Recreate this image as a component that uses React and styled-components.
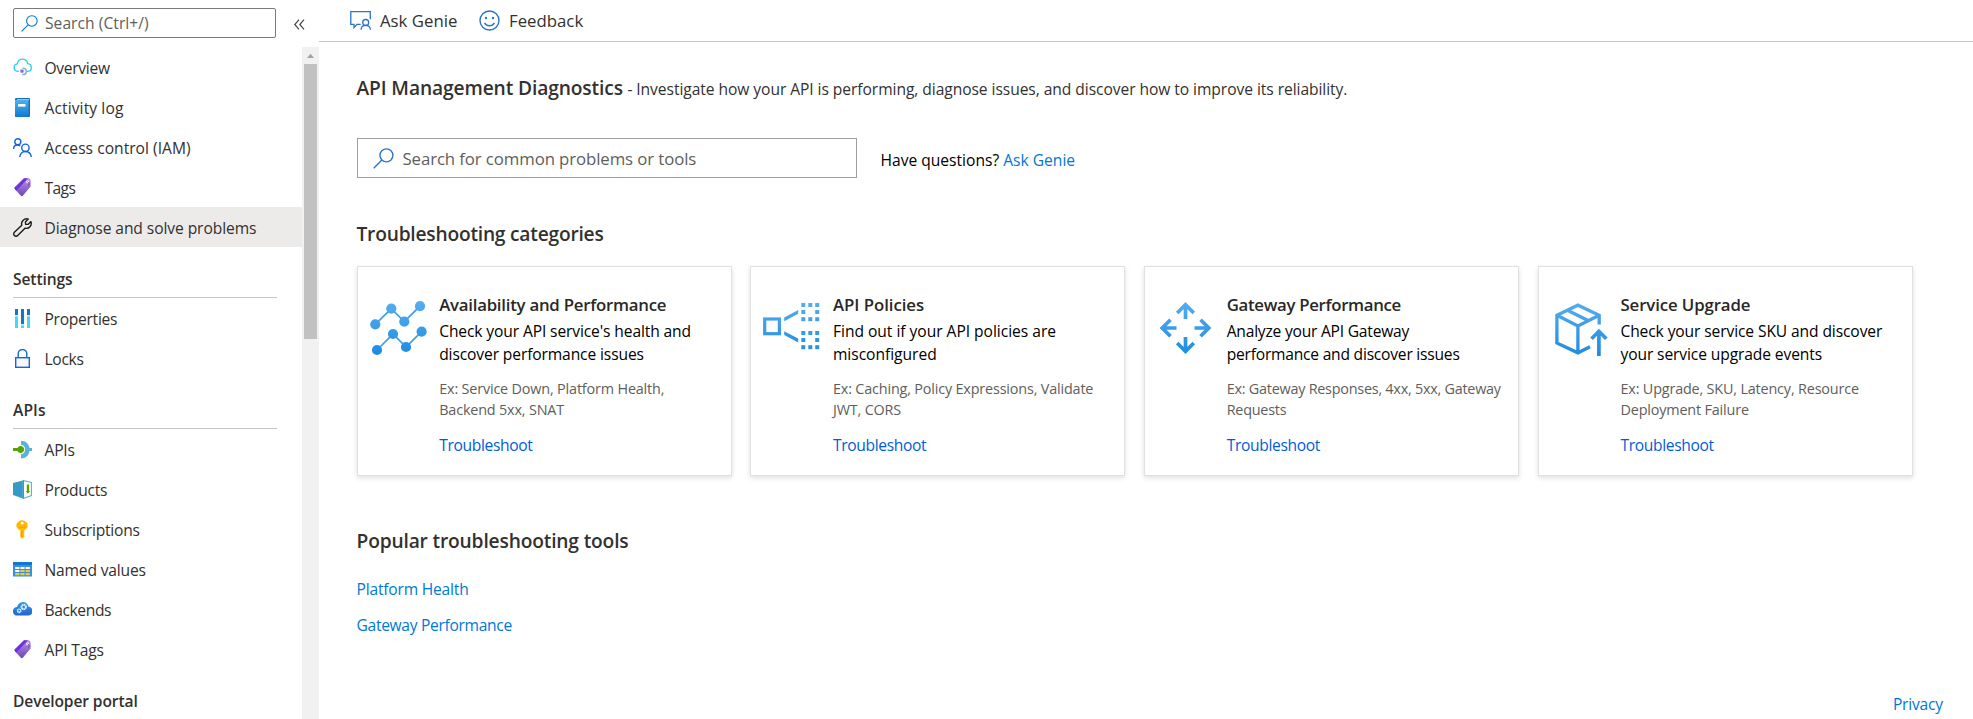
import React from "react";
import styled, { createGlobalStyle } from "styled-components";

const GlobalStyle = createGlobalStyle`
  *, *::before, *::after { box-sizing: border-box; }
  body {
    margin: 0;
    background: #fff;
    color: #323130;
    font: 15.6px/20px "Open Sans", "Noto Sans", sans-serif;
    overflow: hidden;
  }
`;

const Page = styled.div`
  display: flex;
  width: 100%;
  height: 719px;
  overflow: hidden;
`;

/* Sidebar */
const Sidebar = styled.aside`
  display: flex;
  flex-direction: column;
  flex: none;
  width: 319px;
`;
const SidebarTop = styled.div`
  display: flex;
  flex: none;
  align-items: flex-start;
  height: 47px;
  padding: 8px 14px 0 13px;
`;
const MenuSearch = styled.div`
  display: flex;
  align-items: center;
  width: 263px;
  height: 30px;
  padding-left: 7px;
  border: 1px solid #7a7a7a;
  border-radius: 2px;
  color: #605e5c;
  svg { width: 17px; height: 17px; margin-right: 7px; }
`;
const Collapse = styled.span`
  margin: 11px 0 0 18px;
  line-height: 0;
`;
const SidebarBody = styled.div`
  display: flex;
  flex: 1;
  min-height: 0;
`;
const Nav = styled.nav`
  flex: 1;
  overflow: hidden;
`;
const NavItem = styled.a`
  display: flex;
  align-items: center;
  height: 40px;
  padding-left: 13px;
  background: ${(p) => (p.$active ? "#edebe9" : "transparent")};
  svg { flex: none; width: 19px; height: 19px; margin-right: 12.5px; }
`;
const Label = styled.span`
  position: relative;
  top: ${(p) => p.$shift ?? 1}px;
  letter-spacing: ${(p) => p.$track || 0}px;
  white-space: nowrap;
`;
const NavHeading = styled.h3`
  display: flex;
  align-items: center;
  height: 51px;
  margin: 0 25px 0 13px;
  padding-top: 11px;
  border-bottom: 1px solid #c8c6c4;
  font-size: 15.6px;
  font-weight: 600;
`;
const Scrollbar = styled.div`
  display: flex;
  flex-direction: column;
  align-items: center;
  width: 17px;
  background: #f1f1f1;
  svg { flex: none; width: 17px; height: 17px; }
`;
const Thumb = styled.div`
  width: 13px;
  height: 275px;
  background: #c1c1c1;
`;

/* Main pane */
const Main = styled.main`
  display: flex;
  flex-direction: column;
  flex: 1;
  min-width: 0;
`;
const Toolbar = styled.header`
  display: flex;
  flex: none;
  align-items: center;
  height: 42px;
  padding-left: 31px;
  border-bottom: 1px solid #c8c6c4;
  font-size: 16.8px;
`;
const ToolButton = styled.a`
  display: flex;
  align-items: center;
  width: ${(p) => p.$width}px;
  svg { width: 22px; height: 22px; margin-right: 8px; }
`;
const Content = styled.div`
  display: flex;
  flex-direction: column;
  flex: 1;
  padding: 0 30px 0 38px;
`;
const Title = styled.div`
  display: flex;
  align-items: baseline;
  height: 30px;
  margin-top: 31px;
  line-height: 30px;
`;
const TitleName = styled.h1`
  margin: 0 4.5px 0 -0.5px;
  font-size: 19.2px;
  font-weight: 600;
  letter-spacing: -0.12px;
`;
const SearchRow = styled.div`
  display: flex;
  align-items: center;
  margin-top: 35px;
`;
const ToolSearch = styled.div`
  display: flex;
  align-items: center;
  width: 500px;
  height: 40px;
  margin-right: 23.5px;
  padding-left: 15px;
  border: 1px solid #a19f9d;
  color: #605e5c;
  font-size: 16.8px;
  svg { width: 21px; height: 21px; margin-right: 8.5px; }
`;
const Question = styled.span`
  margin-top: 1px;
  color: #000;
  white-space: pre;
`;
const Link = styled.a`
  color: #0078d4;
`;
const SectionTitle = styled.h2`
  height: 30px;
  margin: ${(p) => p.$top}px 0 0 -0.5px;
  font-size: 19.2px;
  font-weight: 600;
  line-height: 30px;
`;
const Cards = styled.div`
  display: grid;
  grid-template-columns: repeat(4, 375px);
  gap: 18.75px;
  margin: 17px 0 0 -0.4px;
`;
const Card = styled.article`
  display: flex;
  height: 210px;
  padding: 25px 10px 0 12px;
  border: 1px solid #e1e1e1;
  box-shadow: 0 2px 5px rgba(0, 0, 0, 0.13);
  > svg { flex: none; width: 60px; height: 60px; margin: 8px 10.600px 0 -1px; }
`;
const CardText = styled.div`
  color: #000;
  white-space: nowrap;
`;
const CardTitle = styled.h3`
  margin: 0;
  color: #292827;
  font-size: 16.8px;
  font-weight: 600;
  line-height: 26px;
`;
const CardDescription = styled.p`
  margin: 2px 0 0;
  line-height: 23px;
`;
const CardExamples = styled.p`
  margin: 12px 0 0;
  color: #605e5c;
  font-size: 14.4px;
  line-height: 21px;
`;
const CardLink = styled.a`
  display: block;
  margin-top: 14px;
  color: #015cda;
  line-height: 22px;
`;
const ToolLinks = styled.div`
  display: flex;
  flex-direction: column;
  gap: 16px;
  margin: 22px 0 0 -0.5px;
`;
const Footer = styled.footer`
  display: flex;
  justify-content: flex-end;
  margin-top: auto;
  padding-bottom: 6px;
`;

/* Icons */
const SearchIcon = ({ color = "#0078d4" }) => (
  <svg viewBox="0 0 20 20" fill="none" stroke={color} strokeWidth="1.3">
    <circle cx="12.8" cy="7" r="6.2" /><path d="M8.4 11.5 .7 19.3" />
  </svg>
);
const CloudIcon = () => (
  <svg viewBox="0 0 19 19" fill="none">
    <path d="M6 13.400H4.500A3.800 3.800 0 0 1 4.200 5.900C4.800 3.100 6.900 1.100 9.500 1.100c2.700 0 4.700 1.900 5.100 4.500 2.200.2 3.700 1.800 3.700 3.900 0 2.200-1.600 3.900-3.900 3.900h-1.600" stroke="#32d0ee" strokeWidth="1.400" />
    <path d="M9.500 10.200h.6a3.200 3.200 0 0 1 0 6.400h-1" stroke="#7cb5dc" strokeWidth="1.500" />
    <rect x="7.400" y="11.500" width="3.200" height="3.200" rx=".8" fill="#9a62cf" />
  </svg>
);
const BookIcon = () => (
  <svg viewBox="0 0 19 19">
    <defs><linearGradient id="book" x2="0" y2="1"><stop stopColor="#4fb0ee" /><stop offset="1" stopColor="#0f79d0" /></linearGradient></defs>
    <path d="M3.300 0H16a1 1 0 0 1 1 1v17a1 1 0 0 1-1 1H3.300A1.300 1.300 0 0 1 2 17.700V1.300A1.300 1.300 0 0 1 3.300 0Z" fill="#1b6fb8" />
    <path d="M4 1h12v1.500H4z" fill="#8fc8ef" />
    <path d="M2 2h13.500v17H3.300A1.300 1.300 0 0 1 2 17.700Z" fill="url(#book)" />
    <rect x="5" y="6" width="7.500" height="2.600" fill="#fff" />
  </svg>
);
const PeopleIcon = () => (
  <svg viewBox="0 0 19 19" fill="none" stroke="#1464dc" strokeWidth="1.400">
    <circle cx="4.800" cy="3.700" r="3" /><path d="M.6 11C.6 8.600 2.200 7 4.500 7c1.100 0 2 .4 2.800 1" />
    <circle cx="12.400" cy="9.800" r="3.700" /><path d="M6.800 19c.2-3.100 2.400-5.500 5.600-5.500S17.900 15.900 18.300 19" />
  </svg>
);
const TagIcon = () => (
  <svg viewBox="0 0 19 19">
    <defs><linearGradient id="tag" x2="0" y2="1"><stop stopColor="#b794e8" /><stop offset="1" stopColor="#6f45b5" /></linearGradient></defs>
    <path d="M11 .3H15.500q1.900.3 2.100 2.200V8.500L10 17.600q-1.100 1-2.100.1L2 11.200q-.9-1-.1-2Z" fill="url(#tag)" />
    <path d="M11 .3H15L3.400 12.700 2 11.200q-.9-1-.1-2Z" fill="#7132dc" />
    <circle cx="14.600" cy="3.700" r="1.500" fill="#f5f0ff" /><path d="M14.500 3.500q2.800 1.800 1 4" stroke="#5a2f9e" fill="none" strokeWidth=".8" />
  </svg>
);
const WrenchIcon = () => (
  <svg viewBox="0 0 19 19" fill="none" stroke="#1b1a19" strokeWidth="1.400" strokeLinejoin="round">
    <path d="M17.900 3.600 15 6.400 12.600 6.200 12.400 4 15.300 1.100A5 5 0 0 0 8.800 7.200L1.400 14.300a2.300 2.300 0 1 0 3.300 3.300L12 10.200a5 5 0 0 0 5.900-6.600Z" />
  </svg>
);
const PropertiesIcon = () => (
  <svg viewBox="0 0 19 19">
    <path d="M2 0h3v6H2zM8 0h3v15H8zM14 0h3v6h-3z" fill="#0f78c8" />
    <path d="M2 7.300h3V19H2zM8 16.200h3V19H8zM14 7.300h3V19h-3z" fill="#45d8f4" />
    <path d="M2 6h3v1.300H2zM8 15h3v1.200H8zM14 6h3v1.300h-3z" fill="#c9ecf8" />
  </svg>
);
const LockIcon = () => (
  <svg viewBox="0 0 19 19" fill="none" stroke="#1464dc" strokeWidth="1.400">
    <path d="M5.200 8.500V4.800a4.300 4.300 0 0 1 8.600 0v3.700" /><rect x="2.700" y="8.700" width="13.600" height="9.600" fill="#f6f8fc" />
  </svg>
);
const ApiIcon = () => (
  <svg viewBox="0 0 19 19">
    <path d="M8 .7c5 0 8 3.300 8.500 7.300H19v3h-2.500C16 15 13 18.500 8 18.500v-4.200a4.800 4.800 0 0 0 0-9.500Z" fill="#59b4d9" />
    <path d="M0 8h4.500a3.500 3.500 0 1 1 0 3H0Z" fill="#57a300" />
  </svg>
);
const ProductsIcon = () => (
  <svg viewBox="0 0 19 19">
    <path d="M10 .5 0 3v12l10 3.500Z" fill="#3999c6" /><path d="M10 .5 18.500 2.500v13L10 18.500Z" fill="#fff" stroke="#59b4d9" strokeWidth="1.200" />
    <path d="M10 .5v18l1-.3V.8Z" fill="#3999c6" /><path d="M13.800 4.500h2.300V11h1l-2.200 2.700L12.800 11h1Z" fill="#57a300" />
  </svg>
);
const KeyIcon = () => (
  <svg viewBox="0 0 19 19">
    <path d="M9 .3c2.500 0 5.800 2.200 5.800 5.200 0 1.900-1.300 3.700-3.300 4.600v1.400l-.8.8.8.8v.8l-.9.900.9 1v1L9.400 18.700 7.300 17v-6.800C5 9.400 3.300 7.600 3.300 5.500 3.300 3 6.500.3 9 .3Z" fill="#ffb900" />
    <circle cx="9.200" cy="3.200" r="1.400" fill="#fff" /><path d="M6 7.300h6.500" stroke="#ff9c00" />
    <path d="M8.800 11v6" stroke="#f08c00" strokeWidth=".9" />
  </svg>
);
const TableIcon = () => (
  <svg viewBox="0 0 19 19">
    <rect y="2" width="19" height="14.500" rx=".5" fill="#3c8fe0" /><path d="M0 2h19v3H0z" fill="#0f78d4" />
    <path d="M2.200 7h4.200v2H2.200zM7.400 7h4.200v2H7.400zM12.600 7h4.200v2h-4.200zM2.200 10h4.200v2H2.200z" fill="#fff" />
    <path d="M7.400 10h4.200v2H7.400zM12.600 10h4.200v2h-4.200zM2.200 13h4.200v2.200H2.200zM7.400 13h4.200v2.200H7.400zM12.600 13h4.200v2.200h-4.200z" fill="#e5d033" />
  </svg>
);
const BackendIcon = () => (
  <svg viewBox="0 0 19 19">
    <defs><linearGradient id="backend" x2="0" y2="1"><stop stopColor="#2d9de5" /><stop offset="1" stopColor="#2464cc" /></linearGradient></defs>
    <path d="M4.300 15.600A4.300 4.300 0 0 1 4.100 7C4.700 4.200 7 2 9.800 2c2.900 0 5 1.900 5.600 4.600A4.500 4.500 0 0 1 14.700 15.600Z" fill="url(#backend)" />
    <circle cx="10.700" cy="7" r="2.200" fill="none" stroke="#e7f2fc" strokeWidth="1.900" strokeDasharray="1.500 .35" />
    <circle cx="6.200" cy="10.800" r="1.600" fill="none" stroke="#e7f2fc" strokeWidth="1.600" strokeDasharray="1.200 .3" />
  </svg>
);
const GenieIcon = () => (
  <svg viewBox="0 0 22 22" fill="none" stroke="#2b74c8" strokeWidth="1.300">
    <path d="M20.300 9.200V1.700H.8v12.600h3.200v3.200l3-3.200h3.700" /><circle cx="15.700" cy="12.500" r="3" />
    <path d="M11 19.700c.2-2.600 2-4.300 4.700-4.300s4.500 1.700 4.700 4.300" />
  </svg>
);
const SmileIcon = () => (
  <svg viewBox="0 0 22 22" fill="none" stroke="#2b74c8" strokeWidth="1.400">
    <circle cx="10.500" cy="10.500" r="9.500" /><path d="M5.600 12.800a5.600 5.600 0 0 0 9.800 0" />
    <g fill="#2b74c8" stroke="none"><circle cx="7" cy="8" r="1.200" /><circle cx="14" cy="8" r="1.200" /></g>
  </svg>
);
const blue = "url(#sky)";
const SkyGradient = () => (
  <defs>
    <linearGradient id="sky" gradientUnits="userSpaceOnUse" x1="0" y1="3" x2="0" y2="55">
      <stop stopColor="#55acee" /><stop offset="1" stopColor="#1f8ce0" />
    </linearGradient>
  </defs>
);
const TrendIcon = () => (
  <svg viewBox="0 0 60 60">
    <SkyGradient />
    {[[[6.3, 24.3], [22.3, 8.6], [35.3, 21.6], [51, 6.2]], [[8, 50], [24, 34], [37, 47], [52.6, 31.6]]].map((points, i) => (
      <g key={i} fill={blue}>
        <polyline points={points.join(" ")} fill="none" stroke="#3d9de8" strokeWidth="1.700" />
        {points.map(([x, y]) => <circle key={x} cx={x} cy={y} r="5.100" />)}
      </g>
    ))}
  </svg>
);
const dotColumns = [39.3, 46.3, 53.2];
const dotRows = [3, 10, 17.2, 31, 38, 45.2];
const PolicyIcon = () => (
  <svg viewBox="0 0 60 60" fill={blue}>
    <SkyGradient />
    <rect x="2.700" y="19" width="14.700" height="14.700" fill="none" stroke={blue} strokeWidth="3.200" />
    <path d="M22.200 17.500 36.200 10v3.800L22.200 21.300ZM22.200 31.300 36.200 38.600v3.800L22.200 35Z" />
    {dotRows.map((y, row) => dotColumns.map((x, col) => (
      row % 3 === 1 && col === 1 ? null : <rect key={`${x}-${y}`} x={x} y={y} width="4" height="4" />
    )))}
  </svg>
);
const ArrowsIcon = () => (
  <svg viewBox="0 0 60 60" fill="none" stroke={blue} strokeWidth="3.700">
    <SkyGradient />
    <path d="M29.500 19V4.800M21.200 13 29.500 4.700 37.800 13M29.500 37V51.200M21.200 43 29.500 51.300 37.800 43M20.500 28H6.300M14.500 19.700 6.200 28 14.500 36.300M38.500 28H52.700M44.500 19.700 52.800 28 44.500 36.300" />
  </svg>
);
const UpgradeIcon = () => (
  <svg viewBox="0 0 60 60" fill="none" stroke={blue} strokeWidth="3.300">
    <SkyGradient />
    <path d="M49.200 24.500V15.300L27.900 5.200 6.900 15.300V43L27.900 52.800 40 46.800M6.900 15.300 27.900 26 49.200 15.300M27.900 26V52.800" />
    <path d="M17.500 10.200 38.500 20.700" />
    <path d="M48.900 56V31.500M41.500 38.800 48.900 31.300 56.300 38.800" strokeWidth="3.700" />
  </svg>
);

const topItems = [
  { label: "Overview", icon: CloudIcon, track: -0.3 },
  { label: "Activity log", icon: BookIcon, track: 0.1 },
  { label: "Access control (IAM)", icon: PeopleIcon, track: 0.025 },
  { label: "Tags", icon: TagIcon, track: -0.6 },
  { label: "Diagnose and solve problems", icon: WrenchIcon, track: -0.084, active: true },
];
const groups = [
  {
    title: "Settings", track: -0.11,
    items: [
      { label: "Properties", icon: PropertiesIcon, track: -0.28 },
      { label: "Locks", icon: LockIcon, track: -0.3 },
    ],
  },
  {
    title: "APIs", track: 0.11,
    items: [
      { label: "APIs", icon: ApiIcon, track: -0.2 },
      { label: "Products", icon: ProductsIcon, track: -0.25 },
      { label: "Subscriptions", icon: KeyIcon, track: -0.237 },
      { label: "Named values", icon: TableIcon, track: -0.173 },
      { label: "Backends", icon: BackendIcon, track: -0.39 },
      { label: "API Tags", icon: TagIcon, track: -0.195 },
    ],
  },
  { title: "Developer portal", track: -0.12, items: [] },
];
const cards = [
  {
    title: "Availability and Performance", icon: TrendIcon, track: [-0.24, -0.12, -0.17],
    description: ["Check your API service's health and", "discover performance issues"],
    examples: ["Ex: Service Down, Platform Health,", "Backend 5xx, SNAT"],
  },
  {
    title: "API Policies", icon: PolicyIcon, track: [-0.04, -0.03, -0.17],
    description: ["Find out if your API policies are", "misconfigured"],
    examples: ["Ex: Caching, Policy Expressions, Validate", "JWT, CORS"],
  },
  {
    title: "Gateway Performance", icon: ArrowsIcon, track: [-0.31, -0.22, -0.24],
    description: ["Analyze your API Gateway", "performance and discover issues"],
    examples: ["Ex: Gateway Responses, 4xx, 5xx, Gateway", "Requests"],
  },
  {
    title: "Service Upgrade", icon: UpgradeIcon, track: [-0.1, -0.11, -0.17],
    description: ["Check your service SKU and discover", "your service upgrade events"],
    examples: ["Ex: Upgrade, SKU, Latency, Resource", "Deployment Failure"],
  },
];

const NavRow = ({ label, icon: Icon, track, active }) => (
  <NavItem $active={active}><Icon /><Label $track={track}>{label}</Label></NavItem>
);
const Lines = ({ lines, track }) => lines.map((line) => (
  <React.Fragment key={line}><Label $track={track} $shift={0}>{line}</Label><br /></React.Fragment>
));

export default function App() {
  return (
    <Page>
      <GlobalStyle />
      <Sidebar>
        <SidebarTop>
          <MenuSearch><SearchIcon /><Label $track={0.05} $shift={0}>Search (Ctrl+/)</Label></MenuSearch>
          <Collapse>
            <svg width="11" height="11" viewBox="0 0 11 11" fill="none" stroke="#484644" strokeWidth="1.200">
              <path d="M5 .7.800 5.500 5 10.300M10 .7 5.800 5.500 10 10.300" />
            </svg>
          </Collapse>
        </SidebarTop>
        <SidebarBody>
          <Nav>
            {topItems.map((item) => <NavRow key={item.label} {...item} />)}
            {groups.map((group) => (
              <React.Fragment key={group.title}>
                <NavHeading><Label $track={group.track}>{group.title}</Label></NavHeading>
                {group.items.map((item) => <NavRow key={item.label} {...item} />)}
              </React.Fragment>
            ))}
          </Nav>
          <Scrollbar>
            <svg viewBox="0 0 17 17"><path d="M5 11 8.500 6.800 12 11Z" fill="#a3a3a3" /></svg>
            <Thumb />
          </Scrollbar>
        </SidebarBody>
      </Sidebar>
      <Main>
        <Toolbar>
          <ToolButton $width={129}><GenieIcon /><Label $shift={0.5}>Ask Genie</Label></ToolButton>
          <ToolButton $width={120}><SmileIcon /><Label $shift={0.5}>Feedback</Label></ToolButton>
        </Toolbar>
        <Content>
          <Title>
            <TitleName>API Management Diagnostics</TitleName>
            <Label $track={-0.06} $shift={0}>- Investigate how your API is performing, diagnose issues, and discover how to improve its reliability.</Label>
          </Title>
          <SearchRow>
            <ToolSearch><SearchIcon color="#2b74c8" /><Label $track={-0.1}>Search for common problems or tools</Label></ToolSearch>
            <Question><Label>Have questions? <Link>Ask Genie</Link></Label></Question>
          </SearchRow>
          <SectionTitle $top={41}><Label $track={-0.22} $shift={0}>Troubleshooting categories</Label></SectionTitle>
          <Cards>
            {cards.map(({ title, icon: Icon, description, examples, track }) => (
              <Card key={title}>
                <Icon />
                <CardText>
                  <CardTitle><Label $track={track[0]} $shift={0}>{title}</Label></CardTitle>
                  <CardDescription><Lines lines={description} track={track[1]} /></CardDescription>
                  <CardExamples><Lines lines={examples} track={track[2]} /></CardExamples>
                  <CardLink><Label $track={-0.35} $shift={0}>Troubleshoot</Label></CardLink>
                </CardText>
              </Card>
            ))}
          </Cards>
          <SectionTitle $top={50}><Label $track={-0.17} $shift={0}>Popular troubleshooting tools</Label></SectionTitle>
          <ToolLinks>
            <Link><Label $track={-0.2}>Platform Health</Label></Link>
            <Link><Label $track={-0.31}>Gateway Performance</Label></Link>
          </ToolLinks>
          <Footer><Link><Label $track={-0.186}>Privacy</Label></Link></Footer>
        </Content>
      </Main>
    </Page>
  );
}
